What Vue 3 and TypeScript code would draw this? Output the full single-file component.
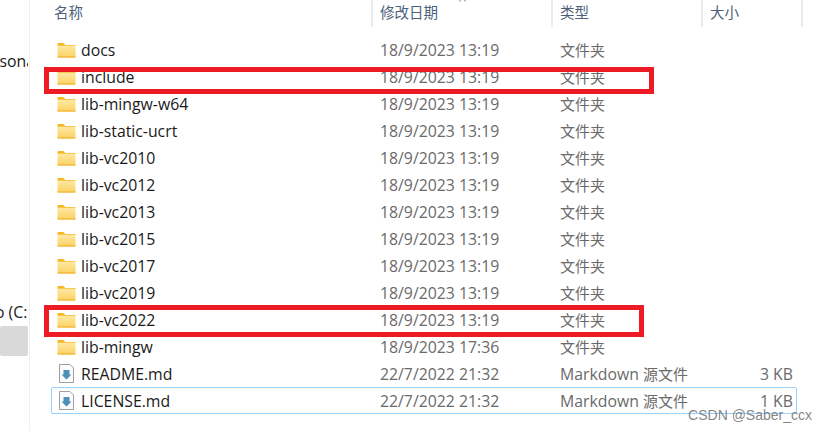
<template>
  <div class="window">
    <!-- nav pane, only the clipped end of it shows -->
    <aside class="nav">
      <div class="nav-text nav-top">rsonal</div>
      <div class="nav-text nav-drive">o (C:)</div>
      <div class="nav-active"></div>
    </aside>

    <main class="list">
      <div class="header">
        <div class="col col-name">名称</div>
        <div class="col col-date">
          <svg class="caret" width="9" height="4" viewBox="0 0 9 4">
            <path d="M1 3.5 4.5 0.5 8 3.5" fill="none" stroke="#8a8a8a" stroke-width="1" />
          </svg>
          修改日期
        </div>
        <div class="col col-type">类型</div>
        <div class="col col-size">大小</div>
      </div>

      <div class="rows">
        <div v-for="f in files" :key="f.name" :class="['row', { selected: f.name === 'LICENSE.md' }]">
          <div class="name">
            <svg v-if="f.folder" class="icon" width="19" height="16" viewBox="0 0 19 16">
              <defs>
                <linearGradient id="folderFill" x1="0" y1="0" x2="0" y2="1">
                  <stop offset="0" stop-color="#ffe9a6" />
                  <stop offset="1" stop-color="#fbd264" />
                </linearGradient>
              </defs>
              <path d="M0.5 2.3C0.5 1.5 1 1 1.8 1H6.3L8.4 3H0.5Z" fill="#f4b71f" />
              <rect x="0.5" y="3" width="18" height="12.5" rx="0.6" fill="url(#folderFill)" />
              <rect x="0.5" y="3" width="18" height="0.9" fill="#f7c544" />
              <rect x="0.5" y="14.5" width="18" height="1" fill="#eeae24" />
            </svg>
            <svg v-else class="icon" width="19" height="19" viewBox="0 0 19 19">
              <path d="M2.5 0.5H13L16.5 4V18.5H2.5Z" fill="#fcfcfc" stroke="#9aa0a6" />
              <path d="M6.5 6H12.5V10.5H14.5L9.5 15.5 4.5 10.5H6.5Z" fill="#4e8fb5" />
            </svg>
            <span>{{ f.name }}</span>
          </div>
          <div class="date">{{ f.date }}</div>
          <div class="type">
            <span v-if="!f.folder" class="type-latin">Markdown </span>{{ f.type }}
          </div>
          <div class="size">{{ f.size }}</div>
        </div>
      </div>
    </main>

    <!-- annotations drawn over the screenshot -->
    <div class="mark mark-a"></div>
    <div class="mark mark-b"></div>
    <div class="watermark">CSDN @Saber_ccx</div>
  </div>
</template>

<script setup lang="ts">
interface FileRow {
  name: string
  date: string
  type: string
  size: string
  folder: boolean
}

const folder = (name: string, date = '18/9/2023 13:19'): FileRow => ({
  name,
  date,
  type: '文件夹',
  size: '',
  folder: true,
})

const files: FileRow[] = [
  folder('docs'),
  folder('include'),
  folder('lib-mingw-w64'),
  folder('lib-static-ucrt'),
  folder('lib-vc2010'),
  folder('lib-vc2012'),
  folder('lib-vc2013'),
  folder('lib-vc2015'),
  folder('lib-vc2017'),
  folder('lib-vc2019'),
  folder('lib-vc2022'),
  folder('lib-mingw', '18/9/2023 17:36'),
  { name: 'README.md', date: '22/7/2022 21:32', type: '源文件', size: '3 KB', folder: false },
  { name: 'LICENSE.md', date: '22/7/2022 21:32', type: '源文件', size: '1 KB', folder: false },
]
</script>

<style>
html,
body {
  background: #fff;
  overflow: hidden;
}
</style>

<style scoped>
.window {
  position: relative;
  display: flex;
  width: 827px;
  height: 431px;
  overflow: hidden;
  background: #fff;
  font-family: "Open Sans", "Noto Sans CJK SC", sans-serif;
  font-size: 15.8px;
}

.nav {
  flex: none;
  width: 30px;
  border-right: 1px solid #f0f0f0;
  overflow: hidden;
  padding-top: 51px;
  box-sizing: border-box;
}

.nav-text {
  color: #1a1a1a;
  white-space: nowrap;
  line-height: 20px;
}

.nav-top {
  width: 28px;
  overflow: hidden;
  text-indent: -7px;
}

.nav-drive {
  width: 28px;
  overflow: hidden;
  margin: 231px 0 0;
  text-indent: -5px;
}

.nav-active {
  width: 28px;
  height: 30px;
  margin-top: 4px;
  background: #d9d9d9;
  border-radius: 2px;
}

.list {
  flex: none;
  width: 796px;
}

.header {
  display: flex;
  height: 27px;
  color: #4c607a;
  font-size: 14.5px;
}

.col {
  position: relative;
  box-sizing: border-box;
  height: 27px;
  line-height: 25px;
  padding-left: 7px;
  border-right: 2px solid #ececec;
}

.col-name {
  width: 343px;
  padding-left: 24px;
}

.col-date {
  width: 180px;
}

.col-type {
  width: 150px;
}

.col-size {
  width: 100px;
}

.caret {
  position: absolute;
  left: 85px;
  top: -2px;
}

.rows {
  padding: 9px 0 0 21px;
}

.row {
  display: flex;
  align-items: center;
  box-sizing: border-box;
  width: 746px;
  height: 27px;
  border: 1px solid transparent;
  border-radius: 2px;
  color: #6a6a6a;
  white-space: nowrap;
}

.row.selected {
  border-color: #99d1ff;
}

.name {
  display: flex;
  align-items: center;
  width: 328px;
  color: #1a1a1a;
}

.icon {
  flex: none;
  margin: 0 5px;
}

.date {
  width: 180px;
}

.type {
  width: 150px;
  font-size: 15px;
}

.type-latin {
  font-size: 15.8px;
}

.size {
  width: 83px;
  text-align: right;
}

.mark {
  position: absolute;
  box-sizing: border-box;
  border: 5px solid #ed1c24;
}

.mark-a {
  left: 44px;
  top: 67px;
  width: 610px;
  height: 27px;
}

.mark-b {
  left: 44px;
  top: 305px;
  width: 600px;
  height: 32px;
}

.watermark {
  position: absolute;
  right: 15px;
  top: 407px;
  color: rgba(90, 90, 90, 0.75);
  font-family: "Liberation Sans", sans-serif;
  font-size: 14px;
}
</style>
